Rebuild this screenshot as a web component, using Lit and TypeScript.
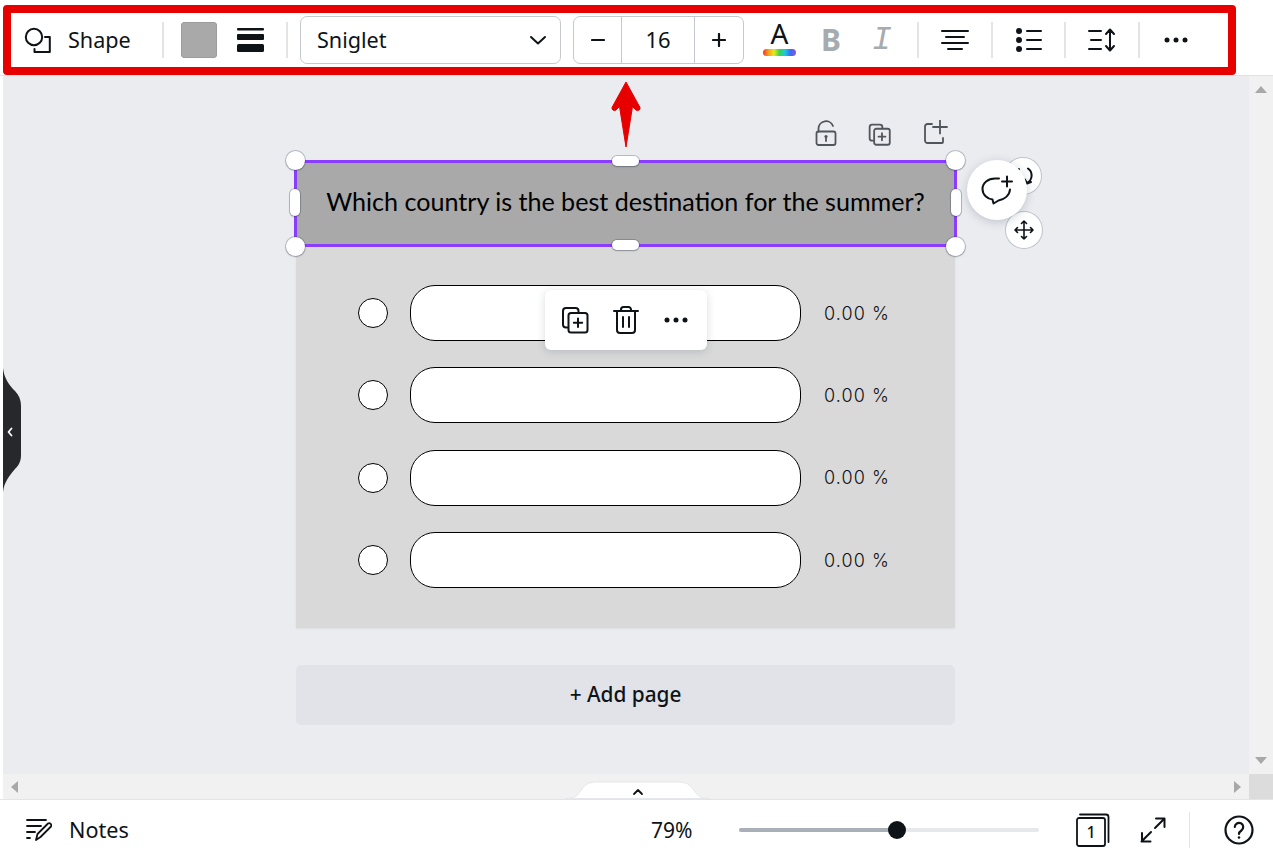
import { LitElement, html, css, svg } from "lit";
import { customElement } from "lit/decorators.js";

const ink = "#0e1318";

const ic = (w: number, h: number, body: unknown, color = ink, sw = 2) => html`<svg
  width=${w} height=${h} viewBox="0 0 ${w} ${h}" fill="none" stroke=${color} stroke-width=${sw}
  stroke-linecap="round" stroke-linejoin="round">${body}</svg>`;

const copyPlus = (c: string, sw = 2) => ic(28, 28, svg`
  <path d="M6.500 21.500H5a3 3 0 0 1-3-3V5a3 3 0 0 1 3-3h9.500a3 3 0 0 1 3 3v1.500"/>
  <rect x="7.500" y="7" width="19" height="19.500" rx="2.500"/>
  <path d="M17 12.500v8.500M12.800 16.700h8.400"/>`, c, sw);

@customElement("app-root")
export class AppRoot extends LitElement {
  static styles = css`
    :host { display: block; width: 1273px; height: 858px; position: relative; overflow: hidden;
      background: #fff; color: #0e1318; font-family: "Noto Sans", Roboto, sans-serif; }
    svg { display: block; flex: none; }
    .app { display: flex; flex-direction: column; height: 858px; }

    .toolbar { height: 76px; box-sizing: border-box; border-bottom: 1px solid #dfe1e5; display: flex;
      align-items: center; padding: 10px 0 5px 23px; font-size: 21.6px; }
    .sep { width: 2px; height: 36px; background: #e2e4e8; flex: none; }
    .sep.after-lines { margin-left: 22px; }
    .shape-label { margin: 0 30px 0 17px; width: 64px; white-space: nowrap; padding-bottom: 2px; }
    .swatch { width: 36px; height: 36px; border-radius: 3px; background: #a9a9a9; box-sizing: border-box;
      border: 1px solid #9c9c9c; margin: 0 20px 0 17px; }
    .font-select { width: 261px; height: 48px; box-sizing: border-box; border: 1px solid #c5c9ce; border-radius: 7px;
      display: flex; align-items: center; justify-content: space-between; padding: 0 13px 0 16px; margin: 0 12px 0 12px; }
    .font-select span { padding-bottom: 2px; }
    .stepper { width: 171px; height: 48px; box-sizing: border-box; border: 1px solid #c5c9ce; border-radius: 7px;
      display: grid; grid-template-columns: 47px 74px 1fr; align-items: stretch; }
    .stepper > div { display: flex; align-items: center; justify-content: center; }
    .stepper .mid { border-left: 1px solid #c5c9ce; border-right: 1px solid #c5c9ce; font-size: 22px; padding-bottom: 2px; }
    .color { width: 33px; margin: 0 0 0 19px; display: flex; flex-direction: column; align-items: center; position: relative; height: 36px; }
    .color .a { font-size: 28px; line-height: 28px; height: 27px; margin-top: -3px; }
    .rainbow { width: 33px; height: 7px; border-radius: 4px; margin-top: 3px;
      background: linear-gradient(90deg, #f0342c, #f7a11a, #e8e81e, #35d64a, #1cc8e8, #3a6cf0, #9a4de8); }
    .b { width: 30px; margin-left: 20px; text-align: center; font-weight: 700; font-size: 30px; color: #a6abb0; padding-bottom: 2px; }
    .i { width: 30px; margin-left: 21px; margin-right: 20px; text-align: center; font-family: "Liberation Mono", monospace;
      font-style: italic; font-size: 33px; color: #a6abb0; }
    .cell { width: 71.7px; display: flex; justify-content: center; flex: none; }

    .work { flex: 1; margin-left: 3px; display: grid; grid-template-columns: 1fr 24px; grid-template-rows: 1fr 25px; min-height: 0; }
    .canvas { background: #ebecf0; padding: 85px 0 0 293px; overflow: hidden; position: relative; }
    .page { width: 659px; }
    .head { height: 85px; box-sizing: border-box; padding-bottom: 5px; background: #a9a9a9; position: relative; z-index: 2; display: flex; align-items: center; justify-content: center;
      font-family: Lato, sans-serif; font-size: 25.1px; color: #000; white-space: nowrap; }
    .body { height: 382px; background: #d9d9d9; box-sizing: border-box; padding: 39px 0 0 62px; display: flex; flex-direction: column;
      gap: 26.4px; position: relative; box-shadow: 0 1px 2px rgba(0,0,0,.06); }
    .row { display: flex; align-items: center; height: 56px; }
    .radio { width: 30px; height: 30px; box-sizing: border-box; border: 1px solid #000; border-radius: 50%; background: #fff; }
    .pill { width: 391px; height: 56px; box-sizing: border-box; border: 1px solid #000; border-radius: 25px; background: #fff; margin: 0 23px 0 22px; }
    .pct { font-family: Inter, sans-serif; font-weight: 300; font-size: 18px; color: #111; letter-spacing: 1.1px; white-space: nowrap; }
    .addpage { margin-top: 37px; height: 60px; box-sizing: border-box; padding-bottom: 2px; border-radius: 5px; background: #e1e3e8; display: flex; align-items: center;
      justify-content: center; font-size: 20.8px; font-weight: 500; }

    .sel { position: absolute; left: -2px; top: -1px; right: -2px; bottom: -1px; border: 3px solid #8b3dff; pointer-events: none; }
    .h { position: absolute; background: #fff; box-shadow: 0 0 0 1px rgba(57,76,96,.3), 0 1px 2px rgba(0,0,0,.2); }
    .c { width: 19px; height: 19px; border-radius: 50%; }
    .tl { left: -10px; top: -10px; } .tr { right: -10px; top: -10px; }
    .bl { left: -10px; bottom: -10px; } .br { right: -10px; bottom: -10px; }
    .ph { width: 27px; height: 10px; border-radius: 5px; left: 316px; }
    .pht { top: -5px; } .phb { bottom: -4px; }
    .pv { width: 10px; height: 27px; border-radius: 5px; top: 28px; }
    .pvl { left: -6px; } .pvr { right: -6px; }

    .top-icons { position: absolute; left: 812px; top: 44px; display: flex; gap: 31px; }
    .top-icons .small { margin-right: 2px; }
    .top-icons .small svg { width: 23px; height: 23px; margin-top: 3px; }
    .round { position: absolute; z-index: 3; border-radius: 50%; background: #fff; display: flex; align-items: center; justify-content: center;
      box-shadow: 0 0 0 1px rgba(57,76,96,.25); }
    .rot { width: 36px; height: 36px; left: 1002px; top: 82px; }
    .mov { width: 36px; height: 36px; left: 1003px; top: 136px; }
    .cmt { width: 60px; height: 60px; left: 964px; top: 84px; box-shadow: 0 2px 10px rgba(57,76,96,.25); }

    .float { position: absolute; left: 249px; top: 44px; width: 162px; height: 60px; border-radius: 6px; background: #fff;
      box-shadow: 0 2px 8px rgba(57,76,96,.2); display: grid; grid-template-columns: 58px 44px 1fr; align-items: center; justify-items: center;
      padding: 0 3px 0 1px; box-sizing: border-box; }

    .tab { position: absolute; left: 0; top: 291px; }
    .sv { background: #f1f1f1; display: flex; flex-direction: column; justify-content: space-between; align-items: center; padding: 10px 0 10px; box-sizing: border-box; }
    .sh { background: #f1f1f1; display: flex; justify-content: space-between; align-items: center; padding: 0 8px; position: relative; }
    .corner { background: #dcdcdc; }
    .bump { position: absolute; left: 562px; bottom: 0; }

    .bottom { height: 59px; box-sizing: border-box; border-top: 1px solid #e2e4e8; display: flex; align-items: center; padding: 2px 0 0 26px; font-size: 21.6px; }
    .notes { margin-left: 17px; width: 582px; white-space: nowrap; padding-bottom: 2px; }
    .zoom { width: 88px; font-size: 21px; white-space: nowrap; }
    .slider { width: 300px; height: 4px; border-radius: 2px; background: #e6e8eb; position: relative; }
    .fill { height: 100%; border-radius: 2px; background: #a9b0b8; }
    .knob { position: absolute; width: 18px; height: 18px; top: -7px; border-radius: 50%; background: #0e1318; margin-left: -9px; }
    .expand { margin-left: 30px; }
    .vsep { width: 1px; height: 36px; background: #e2e4e8; margin: 0 34px 0 23px; }
    .num { font-size: 16px; font-weight: 500; }
    .pages { position: relative; width: 34px; height: 34px; margin-left: 37px; }
    .pages span { position: absolute; left: 1px; top: 5px; width: 28px; height: 28px; display: flex; align-items: center; justify-content: center; }

    .hl { position: absolute; left: 3px; top: 5px; width: 1233px; height: 70px; box-sizing: border-box; border: 8px solid #e60000; border-radius: 4px; pointer-events: none; }
    .arrow { position: absolute; left: 606px; top: 76px; }
  `;

  render() {
    const rows = [0, 1, 2, 3];
    const more = (c = ink) => ic(28, 8, svg`<circle cx="5" cy="4" r="2.500" fill=${c} stroke="none"/><circle cx="14" cy="4" r="2.500" fill=${c} stroke="none"/><circle cx="23" cy="4" r="2.500" fill=${c} stroke="none"/>`, c);
    const value = 158 / 300;
    return html`
      <div class="app">
        <div class="toolbar">
          ${ic(28, 26, svg`<circle cx="11" cy="10" r="8.200"/><path d="M22 10h4.800v15H11.500v-3"/>`)}
          <div class="shape-label">Shape</div>
          <div class="sep"></div>
          <div class="swatch"></div>
          ${ic(27, 24, svg`<rect x="0" y="0" width="27" height="2.500" rx="1" fill=${ink} stroke="none"/><rect x="0" y="6" width="27" height="6" rx="1" fill=${ink} stroke="none"/><rect x="0" y="16" width="27" height="8" rx="1.500" fill=${ink} stroke="none"/>`)}
          <div class="sep after-lines"></div>
          <div class="font-select">
            <span>Sniglet</span>
            ${ic(18, 10, svg`<path d="M2 2l7 6.500L16 2"/>`)}
          </div>
          <div class="stepper">
            <div>${ic(14, 4, svg`<path d="M1 2h12"/>`, ink, 2.2)}</div>
            <div class="mid">16</div>
            <div>${ic(14, 14, svg`<path d="M1 7h12M7 1v12"/>`, ink, 2.2)}</div>
          </div>
          <div class="color"><div class="a">A</div><div class="rainbow"></div></div>
          <div class="b">B</div>
          <div class="i">I</div>
          <div class="sep"></div>
          <div class="cell">${ic(28, 22, svg`<path d="M1 2h26M5 8h18M1 14h26M7 20h14"/>`, ink, 2)}</div>
          <div class="sep"></div>
          <div class="cell">${ic(26, 24, svg`<circle cx="3" cy="3" r="3" fill=${ink} stroke="none"/><circle cx="3" cy="12" r="3" fill=${ink} stroke="none"/><circle cx="3" cy="21" r="3" fill=${ink} stroke="none"/><path d="M11 3h14M11 12h14M11 21h14"/>`)}</div>
          <div class="sep"></div>
          <div class="cell">${ic(28, 24, svg`<path d="M1 3h12M3 12h10M1 21h12M22 2v20M18 6l4-4.500L26 6M18 18l4 4.500 4-4.500"/>`)}</div>
          <div class="sep"></div>
          <div class="cell">${more()}</div>
        </div>

        <div class="work">
          <div class="canvas">
            <div class="page">
              <div class="head">
                Which country is the best destination for the summer?
                <div class="sel"></div>
                <div class="h ph pht"></div><div class="h ph phb"></div>
                <div class="h pv pvl"></div><div class="h pv pvr"></div>
                <div class="h c tl"></div><div class="h c tr"></div>
                <div class="h c bl"></div><div class="h c br"></div>
              </div>
              <div class="body">
                ${rows.map(() => html`<div class="row"><div class="radio"></div><div class="pill"></div><div class="pct">0.00 %</div></div>`)}
                <div class="float">
                  ${copyPlus(ink)}
                  ${ic(26, 28, svg`<path d="M1 5h24M8 4.500V3.500a2.500 2.500 0 0 1 2.500-2.500h5A2.500 2.500 0 0 1 18 3.500v1M4 5v19a3 3 0 0 0 3 3h12a3 3 0 0 0 3-3V5M10 11v10M16 11v10"/>`)}
                  ${more()}
                </div>
              </div>
              <div class="addpage">+ Add page</div>
            </div>

            <div class="top-icons">
              ${ic(22, 26, svg`<rect x="1.500" y="11.500" width="19" height="13.500" rx="2"/><path d="M3.500 11.500V8.500a7.500 7.500 0 0 1 14.500-2.500"/><circle cx="11" cy="16.500" r="1.600" fill="#50565c" stroke="none"/><path d="M11 17v4"/>`, "#50565c", 1.8)}
              <div class="small">${copyPlus("#50565c", 2.2)}</div>
              ${ic(24, 24, svg`<path d="M8 4H3.500A2.500 2.500 0 0 0 1 6.500v14A2.500 2.500 0 0 0 3.500 23H18a1 1 0 0 0 1-1v-4"/><path d="M16 .5v13M9 7h14"/>`, "#50565c", 1.8)}
            </div>
            <div class="round rot">${ic(22, 22, svg`<path d="M7 4a8.500 8.500 0 0 0-4 7M16 3.500A8.500 8.500 0 0 1 15 18M13 14.500l2 4 4-1.500"/>`)}</div>
            <div class="round mov">${ic(20, 20, svg`<path d="M10 1v18M1 10h18M7.500 3.500L10 1l2.500 2.500M7.500 16.500L10 19l2.500-2.500M3.500 7.500L1 10l2.500 2.500M16.500 7.500L19 10l-2.500 2.500"/>`, ink, 1.6)}</div>
            <div class="round cmt">${ic(32, 32, svg`<path d="M18 4.500H14C7 4.500 1.500 9 1.500 15c0 6 5 10 10 10.500l1 4 5-3c6-1 11-5 11.500-11"/><path d="M26 2.500v10M21 7.500h10"/>`, ink, 2)}</div>

            <svg class="tab" width="18" height="126" viewBox="0 0 18 126"><path d="M0 1c1 10 6 17 12 23 4 4 6 9 6 15v49c0 6-2 10-6 14C7 108 1 115 0 125z" fill="#26282b"/><path d="M8.500 61.500l-3 3.500 3 3.500" fill="none" stroke="#fff" stroke-width="1.800" stroke-linecap="round" stroke-linejoin="round"/></svg>
          </div>
          <div class="sv">
            <svg width="12" height="7"><path d="M6 0l6 7H0z" fill="#a8a8a8"/></svg>
            <svg width="12" height="7"><path d="M6 7l6-7H0z" fill="#a8a8a8"/></svg>
          </div>
          <div class="sh">
            <svg width="7" height="12"><path d="M0 6l7-6v12z" fill="#a8a8a8"/></svg>
            <svg width="7" height="12"><path d="M7 6L0 0v12z" fill="#a8a8a8"/></svg>
            <svg class="bump" width="145" height="18" viewBox="0 0 145 18"><path d="M0 17.500c9 0 12-2 16-8C20 3 24 1 33 1h79c9 0 13 2 17 8.500 4 6 7 8 16 8z" fill="#fff" stroke="#e6e7ea"/><path d="M69 13l4-4 4 4" fill="none" stroke="${ink}" stroke-width="1.800" stroke-linecap="round" stroke-linejoin="round"/></svg>
          </div>
          <div class="corner"></div>
        </div>

        <div class="bottom">
          ${ic(26, 24, svg`<path d="M1 2h19M1 8h14M1 14h8M1 20h3"/><path d="M10 22l1.500-6L22 5.500a2.200 2.200 0 0 1 3 3L14.500 19z"/>`, ink, 1.8)}
          <div class="notes">Notes</div>
          <div class="zoom">79%</div>
          <div class="slider"><div class="fill" style="width:${value * 100}%"></div><div class="knob" style="left:${value * 100}%"></div></div>
          <div class="pages">
            ${ic(34, 34, svg`<rect x="1" y="5" width="28" height="28" rx="2"/><path d="M4 1.500h26a2.500 2.500 0 0 1 2.500 2.500v25"/>`, ink, 1.8)}
            <span class="num">1</span>
          </div>
          <div class="expand">${ic(26, 26, svg`<path d="M15 11L24.500 1.500M16 1.500h8.500V10M11 15l-9.500 9.500M2 16v8.500h8.500"/>`, ink, 2)}</div>
          <div class="vsep"></div>
          ${ic(30, 30, svg`<circle cx="15" cy="15" r="13.500"/><path d="M10.800 12a4.200 4.200 0 1 1 6.600 3.500c-1.500 1-2.400 1.800-2.400 3.400"/><circle cx="15" cy="22.500" r="1.300" fill=${ink} stroke="none"/>`, ink, 2.2)}
        </div>
      </div>

      <div class="hl"></div>
      <svg class="arrow" width="40" height="75" viewBox="0 0 40 75"><path d="M20 6L34 31.500a2.500 2.500 0 0 1-4 2.500L26.500 30.500 20 71 13.500 30.500 10 34a2.500 2.500 0 0 1-4-2.500z" fill="#e60000" stroke="#e60000" stroke-width="1" stroke-linejoin="round"/></svg>
    `;
  }
}
